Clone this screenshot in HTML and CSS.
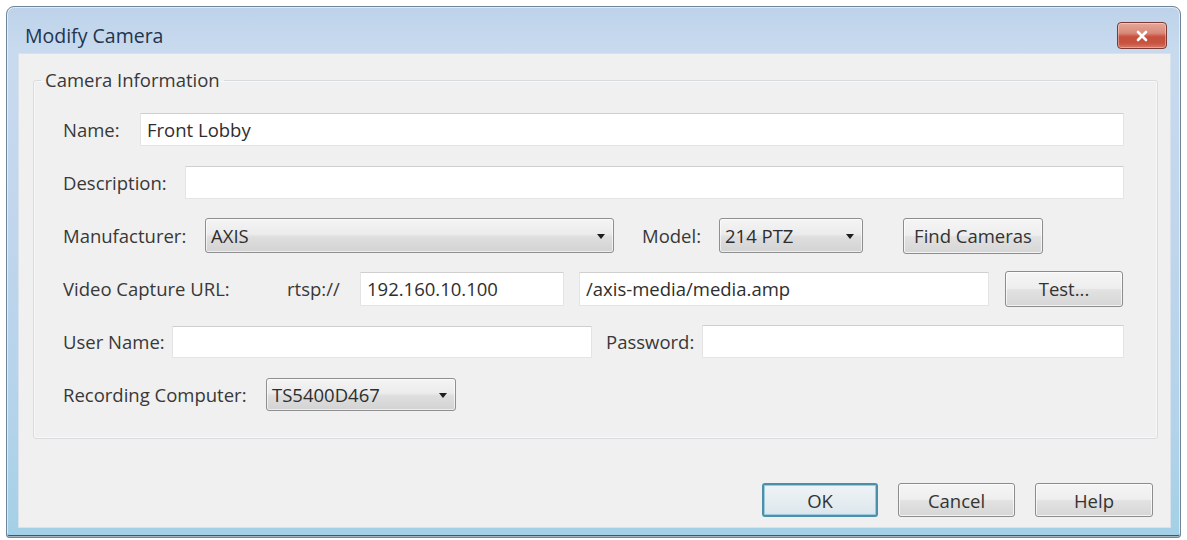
FILE: index.html
```html
<!DOCTYPE html>
<html>
<head>
<meta charset="utf-8">
<title>Modify Camera</title>
<link rel="stylesheet" href="styles.css">
</head>
<body>
<div class="window">
  <div class="titlebar">
    <span class="title">Modify Camera</span>
    <button class="close" aria-label="Close">
      <svg width="14" height="12" viewBox="0 0 14 12"><path d="M3 2 L11 10 M11 2 L3 10" stroke="#fff" stroke-width="2.6" stroke-linecap="round"/></svg>
    </button>
  </div>
  <div class="client">
    <fieldset class="group">
      <legend>Camera Information</legend>
      <div class="rows">
        <div class="row">
          <label class="lbl w-name">Name:</label>
          <input class="field grow" type="text" value="Front Lobby">
        </div>
        <div class="row">
          <label class="lbl w-desc">Description:</label>
          <input class="field grow" type="text" value="">
        </div>
        <div class="row">
          <label class="lbl w-manu">Manufacturer:</label>
          <div class="combo w-manu-combo"><span>AXIS</span><i class="arrow"></i></div>
          <label class="lbl w-model">Model:</label>
          <div class="combo w-model-combo"><span>214 PTZ</span><i class="arrow"></i></div>
          <button class="btn w-find">Find Cameras</button>
        </div>
        <div class="row">
          <label class="lbl w-url">Video Capture URL:</label>
          <span class="lbl w-rtsp">rtsp://</span>
          <input class="field w-host" type="text" value="192.160.10.100">
          <input class="field w-path" type="text" value="/axis-media/media.amp">
          <button class="btn w-test">Test...</button>
        </div>
        <div class="row">
          <label class="lbl w-user">User Name:</label>
          <input class="field w-user-in" type="text" value="">
          <label class="lbl w-pass">Password:</label>
          <input class="field grow" type="text" value="">
        </div>
        <div class="row">
          <label class="lbl w-rec">Recording Computer:</label>
          <div class="combo w-rec-combo"><span>TS5400D467</span><i class="arrow"></i></div>
        </div>
      </div>
    </fieldset>
    <div class="actions">
      <button class="btn dlg default">OK</button>
      <button class="btn dlg w-cancel">Cancel</button>
      <button class="btn dlg w-help">Help</button>
    </div>
  </div>
</div>
</body>
</html>
```
FILE: styles.css
```css
* { box-sizing: border-box; }
html, body { margin: 0; padding: 0; }
body {
  background: #ffffff;
  font-family: "Open Sans", "Noto Sans", sans-serif;
  font-size: 18.5px;
  color: #333333;
}

.window {
  margin: 6px;
  width: 1175px;
  height: 532px;
  border: 1px solid #6f8599;
  border-radius: 8px 8px 3px 3px;
  background: linear-gradient(180deg, #bdd2ea 0%, #c8daee 8%, #c1d6ec 40%, #b2d3ea 80%, #a3d0e6 100%);
  box-shadow: inset 0 0 0 1px rgba(255,255,255,0.55), inset 0 -2px 0 #2f5f6e;
  display: flex;
  flex-direction: column;
  padding: 0 9px 9px 11px;
}

.titlebar {
  height: 46px;
  flex: none;
  display: flex;
  align-items: center;
  justify-content: space-between;
  padding: 11px 4px 0 7px;
}
.title {
  font-size: 19.5px;
  color: #22354d;
}
.close {
  width: 50px;
  height: 27px;
  border: 1px solid #7c3a34;
  border-radius: 4px;
  background: linear-gradient(180deg, #e5a798 0%, #d98a7a 40%, #c7503e 55%, #c65340 80%, #d77a66 100%);
  box-shadow: inset 0 0 0 1px rgba(255,255,255,0.35);
  display: flex;
  align-items: center;
  justify-content: center;
  padding: 0;
}

.client {
  flex: 1;
  background: #f0f0f0;
  border: 1px solid #d9e2ec;
  padding: 14px 12px 0 14px;
  display: flex;
  flex-direction: column;
}

.group {
  margin: 0;
  padding: 0;
  border: 1px solid #d9dcdf;
  border-radius: 3px;
  box-shadow: inset 0 0 0 1px #f8f8f8;
}
.group legend {
  margin-left: 7px;
  padding: 0 4px;
  line-height: 24px;
  color: #383838;
}

.rows {
  padding: 20px 33px 26px 29px;
  display: flex;
  flex-direction: column;
  gap: 18px;
}
.row {
  height: 35px;
  display: flex;
  align-items: center;
}
.lbl {
  flex: none;
  color: #383838;
  white-space: nowrap;
}

.field {
  height: 33px;
  background: #ffffff;
  border: 1px solid #e4e4e4;
  border-top-color: #cfcfcf;
  border-radius: 1px;
  font: inherit;
  color: #2e2e2e;
  padding: 0 6px;
  outline: none;
  min-width: 0;
}
.grow { flex: 1; }

.combo {
  flex: none;
  height: 35px;
  border: 1px solid #8d8f91;
  border-radius: 3px;
  background: linear-gradient(180deg, #f4f4f4 0%, #ececec 45%, #dedede 55%, #d3d3d3 100%);
  box-shadow: inset 0 0 0 1px rgba(255,255,255,0.6);
  display: flex;
  align-items: center;
  justify-content: space-between;
  padding: 0 8px 0 5px;
  color: #2e2e2e;
}
.arrow {
  width: 0;
  height: 0;
  border-left: 4px solid transparent;
  border-right: 4px solid transparent;
  border-top: 5px solid #1e1e1e;
  margin-top: 2px;
}

.btn {
  flex: none;
  height: 36px;
  font: inherit;
  color: #333;
  border: 1px solid #8c8c8c;
  border-radius: 3px;
  background: linear-gradient(180deg, #f5f5f5 0%, #eeeeee 48%, #e2e2e2 52%, #d6d6d6 100%);
  box-shadow: inset 0 0 0 1px rgba(255,255,255,0.7);
  padding: 0;
}

/* row 1-2 */
.w-name { width: 77px; }
.w-desc { width: 122px; }
/* row 3 */
.w-manu { width: 142px; }
.w-manu-combo { width: 409px; }
.w-model { width: 77px; margin-left: 28px; }
.w-model-combo { width: 144px; }
.w-find { width: 140px; margin-left: 40px; }
/* row 4 */
.w-url { width: 224px; }
.w-rtsp { width: 73px; }
.w-host { width: 204px; height: 34px; }
.w-path { width: 410px; height: 34px; margin-left: 15px; }
.w-test { width: 118px; margin-left: 16px; }
/* row 5 */
.w-user { width: 109px; }
.w-user-in { width: 420px; height: 32px; }
.w-pass { width: 96px; margin-left: 14px; }
/* row 6 */
.w-rec { width: 203px; }
.w-rec-combo { width: 190px; height: 33px; }

.actions {
  margin-top: 44px;
  margin-right: 5px;
  display: flex;
  justify-content: flex-end;
  gap: 20px;
}
.dlg { height: 34px; width: 116px; }
.w-cancel { width: 117px; }
.w-help { width: 118px; }
.default {
  border: 2px solid #4c8fab;
  box-shadow: inset 0 0 0 1px #9cc9dc;
  background: linear-gradient(180deg, #eef3f6 0%, #e6eef2 50%, #dbe6ec 100%);
}
```
